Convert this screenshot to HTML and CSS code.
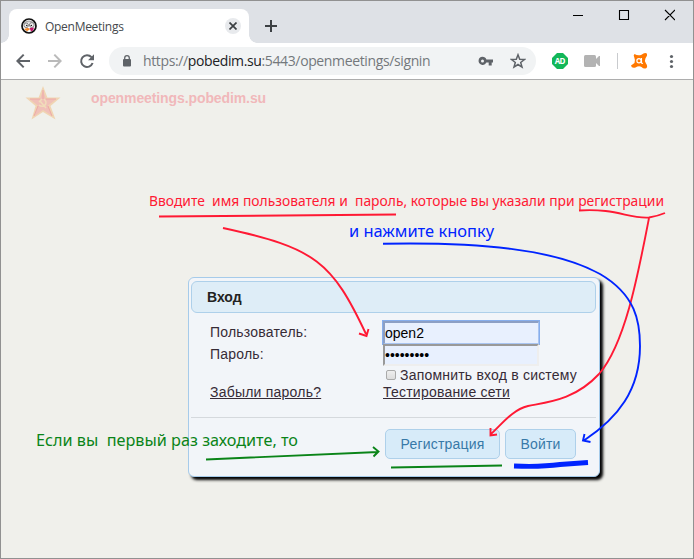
FILE: index.html
```html
<!DOCTYPE html>
<html lang="ru">
<head>
<meta charset="utf-8">
<title>OpenMeetings</title>
<link rel="stylesheet" href="styles.css">
</head>
<body>
<div class="window">
  <header class="tabstrip">
    <div class="tab">
      <svg class="favicon" width="16" height="16" viewBox="0 0 16 16"><circle cx="8" cy="8" r="7" fill="#fff" stroke="#111" stroke-width="1.7"/><path d="M3 5Q8 1 13 5" fill="#ddd" stroke="#999"/><circle cx="5.2" cy="7.3" r="2.3" fill="#eee" stroke="#666" stroke-width=".8"/><circle cx="10.8" cy="7" r="2.4" fill="#eee" stroke="#666" stroke-width=".8"/><circle cx="5.8" cy="7.5" r=".7"/><circle cx="10.3" cy="7.4" r=".7"/><path d="M3 11l4-1.2 2 1.5-3 2z" fill="#f58a2c"/><path d="M8.500 10l4.500-.5-1 3-2 1z" fill="#c2186c"/></svg>
      <span class="tab-title">OpenMeetings</span>
      <span class="tab-close"><svg width="8" height="8" viewBox="0 0 8 8"><path d="M.5.5l7 7M7.5.5l-7 7" stroke="#3c4043" stroke-width="1.7"/></svg></span>
    </div>
    <svg class="new-tab" width="12" height="12" viewBox="0 0 12 12"><path d="M6 0v12M0 6h12" stroke="#3c4043" stroke-width="2"/></svg>
    <svg class="controls" width="103" height="12" viewBox="0 0 103 12"><path d="M1 6.500h10M47.500 1.500h9v9h-9zM93 1l10 10M103 1l-10 10" fill="none" stroke="#000" stroke-width="1.1"/></svg>
  </header>
  <div class="toolbar">
    <svg class="nav" width="80" height="16" viewBox="0 0 80 16"><g fill="none" stroke-width="2"><path d="M14 8H1.500M7.700 1.600L1.400 8l6.300 6.400" stroke="#5f6368"/><path d="M32 8h12.500M38.300 1.600L44.600 8l-6.300 6.400" stroke="#bababa"/><path d="M75.500 4.200A5.900 5.900 0 1 0 76.600 10" stroke="#5f6368"/></g><path d="M78 1.300v6h-6z" fill="#5f6368"/></svg>
    <div class="omnibox">
      <svg class="lock" width="10" height="12" viewBox="0 0 10 12"><rect x="1" y="4" width="8" height="7.500" rx="1" fill="#5f6368"/><path d="M2.700 5V3a2.300 2.300 0 0 1 4.600 0v2" fill="none" stroke="#5f6368" stroke-width="1.300"/></svg>
      <span class="url">https://<b>pobedim.su</b>:5443/openmeetings/signin</span>
      <svg class="key" width="16" height="10" viewBox="0 0 16 10"><path fill="#5f6368" fill-rule="evenodd" d="M4.500.7a4.100 4.100 0 0 1 3.900 2.800H15v3h-1.300v3h-3v-3H8.400A4.100 4.100 0 1 1 4.500.7zm0 2.700a1.500 1.500 0 1 0 0 3 1.500 1.500 0 0 0 0-3z"/></svg>
      <svg class="star" width="16" height="16" viewBox="0 0 16 16"><path d="M8 1.800l1.700 4.500 4.800.2-3.800 3 1.300 4.600L8 11.500l-4 2.600 1.300-4.600-3.800-3 4.800-.2z" fill="none" stroke="#5f6368" stroke-width="1.500"/></svg>
    </div>
    <svg class="ext" width="124" height="18" viewBox="0 0 124 18">
      <path d="M5 1h6l5 5v6l-5 5H5l-5-5V6z" fill="#12b759"/><text class="ad" x="2.800" y="12" textLength="10.500">AD</text>
      <rect x="32" y="3" width="12" height="12" rx="1.500" fill="#b3b3b3"/><path d="M43 8l4-4h1v10h-1l-4-4z" fill="#b3b3b3"/>
      <path d="M65.500 1v16" stroke="#c9cbce"/>
      <path d="M82.500 2Q86 4.200 89.500 2.800Q93 0 95 1.800Q95.700 3.500 93.500 6.300Q92 9 94 11.500Q96 14 94.500 16Q92 17.500 89.500 15Q87 13.200 83.500 15.500Q79.500 16.500 79 13.500L82.500 11Q83.500 8 82.300 5.500Q81 3 82.500 2Z" fill="#ff7800"/><circle cx="87" cy="8.800" r="2.100" fill="none" stroke="#fff" stroke-width="1.200"/><path d="M89.500 6v5l1.500.500" fill="none" stroke="#fff" stroke-width="1.100"/>
      <g fill="#5f6368"><circle cx="119.500" cy="4.500" r="1.600"/><circle cx="119.500" cy="9.500" r="1.600"/><circle cx="119.500" cy="14.500" r="1.600"/></g>
    </svg>
  </div>
  <main class="page">
    <div class="brand">
      <svg class="logo" width="36" height="34" viewBox="0 0 36 34"><path d="M18 0l4.400 11.500H35.500L25.500 20l5 13.500L18 26 6.500 33.500 10.500 20 .5 11.500h13.100z" fill="#f0d5b3"/><path d="M18 4l3 9h10.500l-8.500 6.500 3.800 10.200L18 24l-8.300 6 3-10.500L4.500 13H15z" fill="#f0c0b8"/><path d="M18 4v9M15 13H5M21 13h10M23 20l4 10M13 20l-4 10" fill="none" stroke="#eeaaa5"/><path d="M19 13q4 4 0 7-3 1-5-1m1-4l6 7m-7-6l3-3" fill="none" stroke="#f1dcba" stroke-width="1.500"/></svg>
      <span class="site">openmeetings.pobedim.su</span>
    </div>
    <form class="dialog">
      <h1 class="title">Вход</h1>
      <div class="fields">
        <label class="row r1">Пользователь:</label><input class="inp focused" type="text" value="open2">
        <label class="row r2">Пароль:</label><input class="inp" type="password" value="123456789">
        <span></span><label class="remember"><i class="check"></i><span>Запомнить вход в систему</span></label>
        <a class="link forgot">Забыли пароль?</a><a class="link test">Тестирование сети</a>
      </div>
      <div class="actions"><button type="button" class="btn reg">Регистрация</button><button type="button" class="btn enter">Войти</button></div>
    </form>
  </main>
</div>
<svg class="notes" width="694" height="559" viewBox="0 0 694 559">
  <g class="red">
    <text x="149" y="206" textLength="515" lengthAdjust="spacingAndGlyphs">Вводите&#160; имя пользователя и&#160; пароль, которые вы указали при регистрации</text>
    <path d="M159 216.500L396 214.500M579 210.500C616 208 629 219 649 217.500Q658 216 665 213M223 228C316 248 332 262 366 334M359 333.500L366.500 336L368.500 329M649 218C638 275 625 344 599 374C575 400 548 402 528 406C512 410 502 424 491 434M490.500 428V435.500L497 434.500"/>
  </g>
  <g class="blue">
    <text x="349" y="237" textLength="145" lengthAdjust="spacingAndGlyphs">и нажмите кнопку</text>
    <path d="M383 243.800C480 242 555 249 600 274C636 295 640 322 640 346C640 390 618 418 584 440.500M584.500 434L583 440.500L590.500 442"/>
    <path class="thick" d="M514 466Q542 467 560 464.500L588 462.500"/>
  </g>
  <g class="green">
    <text x="36" y="446" textLength="262" lengthAdjust="spacingAndGlyphs">Если вы&#160; первый раз заходите, то</text>
    <path d="M206 459.500L378 452M373 447L378.500 451.500L373.500 456.500M391 467.500L502 465.500"/>
  </g>
</svg>
</body>
</html>
```
FILE: styles.css
```css
* { box-sizing: border-box; }
body { margin: 0; position: relative; overflow: hidden; }
.window { width: 694px; height: 559px; border: 1px solid #919191; background: #f0f0eb; display: flex; flex-direction: column; }
.tabstrip { height: 42px; background: #dee1e6; display: flex; align-items: flex-start; padding-left: 8px; }
.tab { width: 240px; height: 34px; margin-top: 8px; background: #fff; border-radius: 8px 8px 0 0; display: flex; align-items: center; padding: 0 8px 0 12px; position: relative; }
.tab::before, .tab::after { content: ""; position: absolute; bottom: 0; width: 8px; height: 8px; }
.tab::before { left: -8px; background: radial-gradient(circle at 0 0, transparent 7.5px, #fff 8px); }
.tab::after { right: -8px; background: radial-gradient(circle at 100% 0, transparent 7.5px, #fff 8px); }
.tab-title { font: 12px "Open Sans", "Noto Sans", sans-serif; color: #45494d; margin-left: 8px; flex: 1; letter-spacing: -.28px; }
.tab-close { width: 16px; height: 16px; border-radius: 50%; background: #e8eaed; display: flex; align-items: center; justify-content: center; }
.new-tab { margin: 19px 0 0 16px; }
.controls { margin: 8px 18px 0 auto; }
.toolbar { height: 37px; background: #fff; border-bottom: 1px solid #adadad; display: flex; align-items: center; padding: 0 0 1px 15px; }
.omnibox { width: 427px; height: 28px; margin-left: 13px; border-radius: 14px; background: #f1f3f4; display: flex; align-items: center; padding: 0 10px 0 13px; }
.url { font: 14px/20px "Open Sans", "Noto Sans", sans-serif; color: #74787c; margin-left: 11px; flex: 1; white-space: nowrap; letter-spacing: -.37px; }
.url b { font-weight: 400; color: #202124; }
.key { margin-right: 16px; }
.ext { margin-left: 16px; }
.ad { font: bold 8px "Open Sans", sans-serif; fill: #fff; }
.page { flex: 1; }
.brand { display: flex; align-items: flex-start; padding: 6px 0 0 24px; height: 197px; }
.site { font: bold 14px/16px "Liberation Sans", sans-serif; color: #f1b8ba; margin: 4px 0 0 30px; letter-spacing: -.1px; }
.dialog { width: 412px; height: 200px; margin-left: 187px; padding: 3px; border: 1px solid #a6cbea; border-radius: 6px; background: #f2f5f9; box-shadow: 3px 3px 3px #000; font: 14px/18px "Liberation Sans", sans-serif; color: #362b36; display: flex; flex-direction: column; }
.title { height: 32px; margin: 0 0 0 -1px; padding-left: 15px; border: 1px solid #aed0ea; border-radius: 6px; background: #deedf7; font-size: 14px; line-height: 31px; color: #222; }
.fields { display: grid; grid-template-columns: 173px 1fr; grid-template-rows: 23px 22px 17px 18px; padding: 8px 0 0 18px; height: 104px; align-content: start; white-space: nowrap; }
.row { letter-spacing: .2px; }
.r1 { padding-top: 2px; }
.r2 { padding-top: 1px; }
.inp { width: 156px; height: 22px; padding: 1px 0; border: 2px solid; border-color: #999 #eee #eee #999; background: #e8f0fe; font: 14px "Liberation Sans", sans-serif; color: #000; }
.focused { height: 23px; outline: 1px solid #86aeed; border-color: #8c9fc4 #a9c5f2 #a9c5f2 #8c9fc4; border-right-width: 1px; border-bottom-width: 1px; }
.remember { display: flex; align-items: center; letter-spacing: .2px; }
.check { width: 10px; height: 10px; margin: 0 4px 0 3px; border: 1px solid #aaa; border-radius: 2px; background: linear-gradient(#eee, #ddd); }
.link { text-decoration: underline; justify-self: start; letter-spacing: .22px; }
.actions { flex: 1; border-top: 1px solid #d5d9dd; display: flex; align-items: flex-start; gap: 5px; padding: 11px 0 0 193px; margin-left: -1px; }
.actions { padding-left: 194px; }
.btn { height: 30px; padding: 0; border: 1px solid #aed0ea; border-radius: 5px; background: #d7ebf9; color: #3779a8; font: 14px "Liberation Sans", sans-serif; letter-spacing: .2px; }
.reg { width: 115px; }
.enter { width: 71px; }
.notes { position: absolute; left: 0; top: 0; pointer-events: none; }
.notes path { fill: none; stroke-width: 1.9; }
.notes text { font-family: "Noto Sans", "Open Sans", sans-serif; font-size: 16px; }
.red path { stroke: #ff1934; }
.notes .red text { fill: #ff1934; font-size: 14px; }
.blue path { stroke: #0024ff; }
.blue text { fill: #0024ff; }
.notes .thick { stroke-width: 4.8; }
.green path { stroke: #0a8418; }
.green text { fill: #0a8418; }
```
